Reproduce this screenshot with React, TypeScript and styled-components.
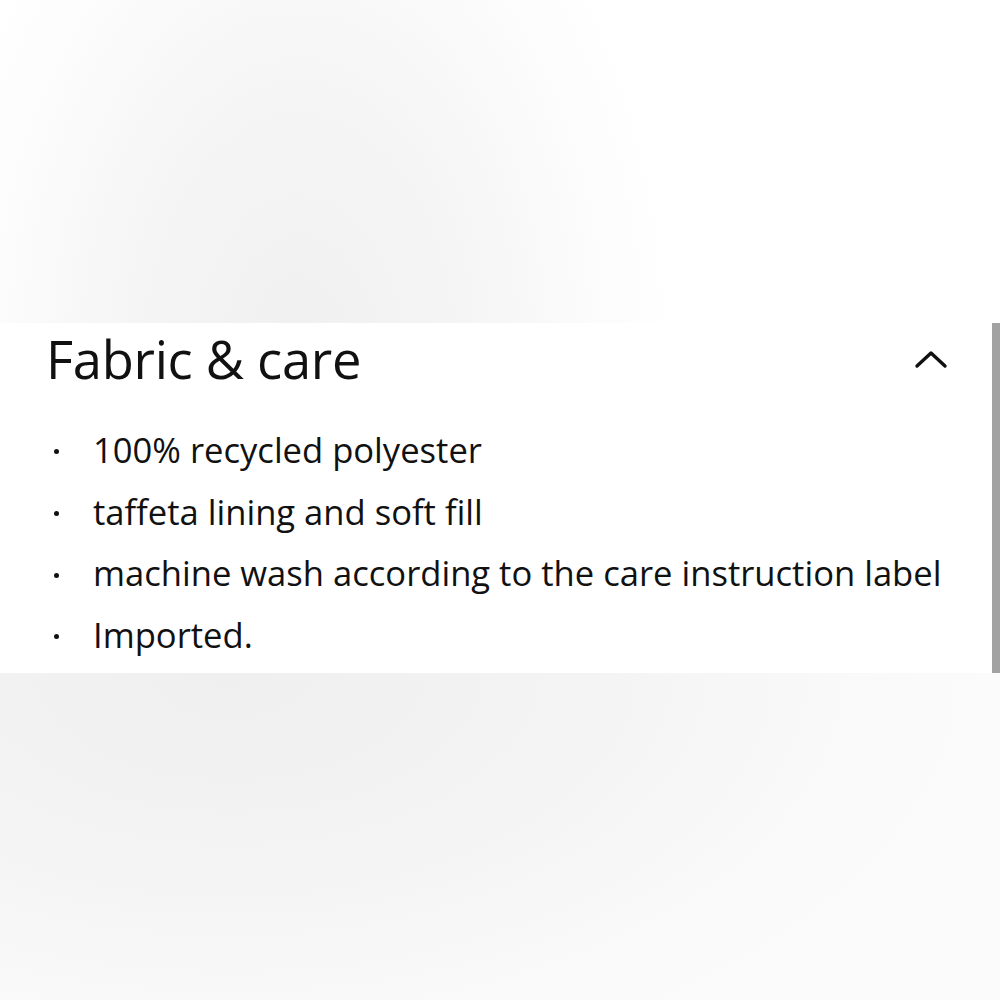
import React from 'react'
import styled, { createGlobalStyle } from 'styled-components';

const GlobalStyle = createGlobalStyle`
  html, body {
    margin: 0;
    padding: 0;
    background: #ffffff;
  }
  * {
    box-sizing: border-box;
  }
`

const items = [
  '100% recycled polyester',
  'taffeta lining and soft fill',
  'machine wash according to the care instruction label',
  'Imported.',
]

const App: React.FC = () => {
  return (
    <Page>
      <GlobalStyle />
      <TopBand />
      <Panel>
        <Content>
          <Header>
            <Title>Fabric &amp; care</Title>
            <Toggle aria-label="collapse">
              <svg width="34" height="20" viewBox="0 0 34 20">
                <path d="M3 17 L17 4 L31 17" fill="none" stroke="#111" strokeWidth="3.4" strokeLinecap="round" strokeLinejoin="round" />
              </svg>
            </Toggle>
          </Header>
          <List>
            {items.map((text, i) => (
              <Item key={i}>
                <Dot />
                <span>{text}</span>
              </Item>
            ))}
          </List>
        </Content>
        <ScrollBar />
      </Panel>
      <BottomBand />
    </Page>
  )
}

export default App;

const Page = styled.div`
  width: 1000px;
  height: 1000px;
  display: flex;
  flex-direction: column;
  overflow: hidden;
  font-family: "Open Sans", "Liberation Sans", Arial, sans-serif;
  color: #111111;
`
const TopBand = styled.div`
  height: 323px;
  flex-shrink: 0;
  background: radial-gradient(ellipse 380px 600px at 300px 360px, #f0f0f0 0%, #f5f5f5 45%, #fcfcfc 80%, #ffffff 100%);
`
const BottomBand = styled.div`
  flex: 1;
  background: radial-gradient(ellipse 760px 420px at 230px 0px, #efefef 0%, #f4f4f4 50%, #f9f9f9 80%, #fbfbfb 100%);
`
const Panel = styled.div`
  height: 350px;
  flex-shrink: 0;
  display: flex;
  background: #ffffff;
`
const Content = styled.div`
  flex: 1;
  padding: 6px 46px 0 46px;
`
const ScrollBar = styled.div`
  width: 8px;
  background: #a2a2a2;
`
const Header = styled.div`
  height: 60px;
  display: flex;
  align-items: center;
  justify-content: space-between;
`
const Title = styled.h2`
  margin: 0;
  font-size: 52.5px;
  line-height: 60px;
  font-weight: 500;
  letter-spacing: -0.3px;
`
const Toggle = styled.button`
  border: none;
  background: none;
  padding: 0;
  margin-right: -2px;
  display: flex;
  cursor: pointer;
`
const List = styled.ul`
  list-style: none;
  margin: 30px 0 0 0;
  padding: 0;
`
const Item = styled.li`
  display: flex;
  align-items: center;
  font-size: 34.6px;
  font-weight: 500;
  line-height: 61.7px;
  height: 61.7px;
  white-space: nowrap;
`
const Dot = styled.span`
  width: 5px;
  height: 5px;
  border-radius: 50%;
  background: #111111;
  margin: 4px 34px 0 8px;
  flex-shrink: 0;
`
